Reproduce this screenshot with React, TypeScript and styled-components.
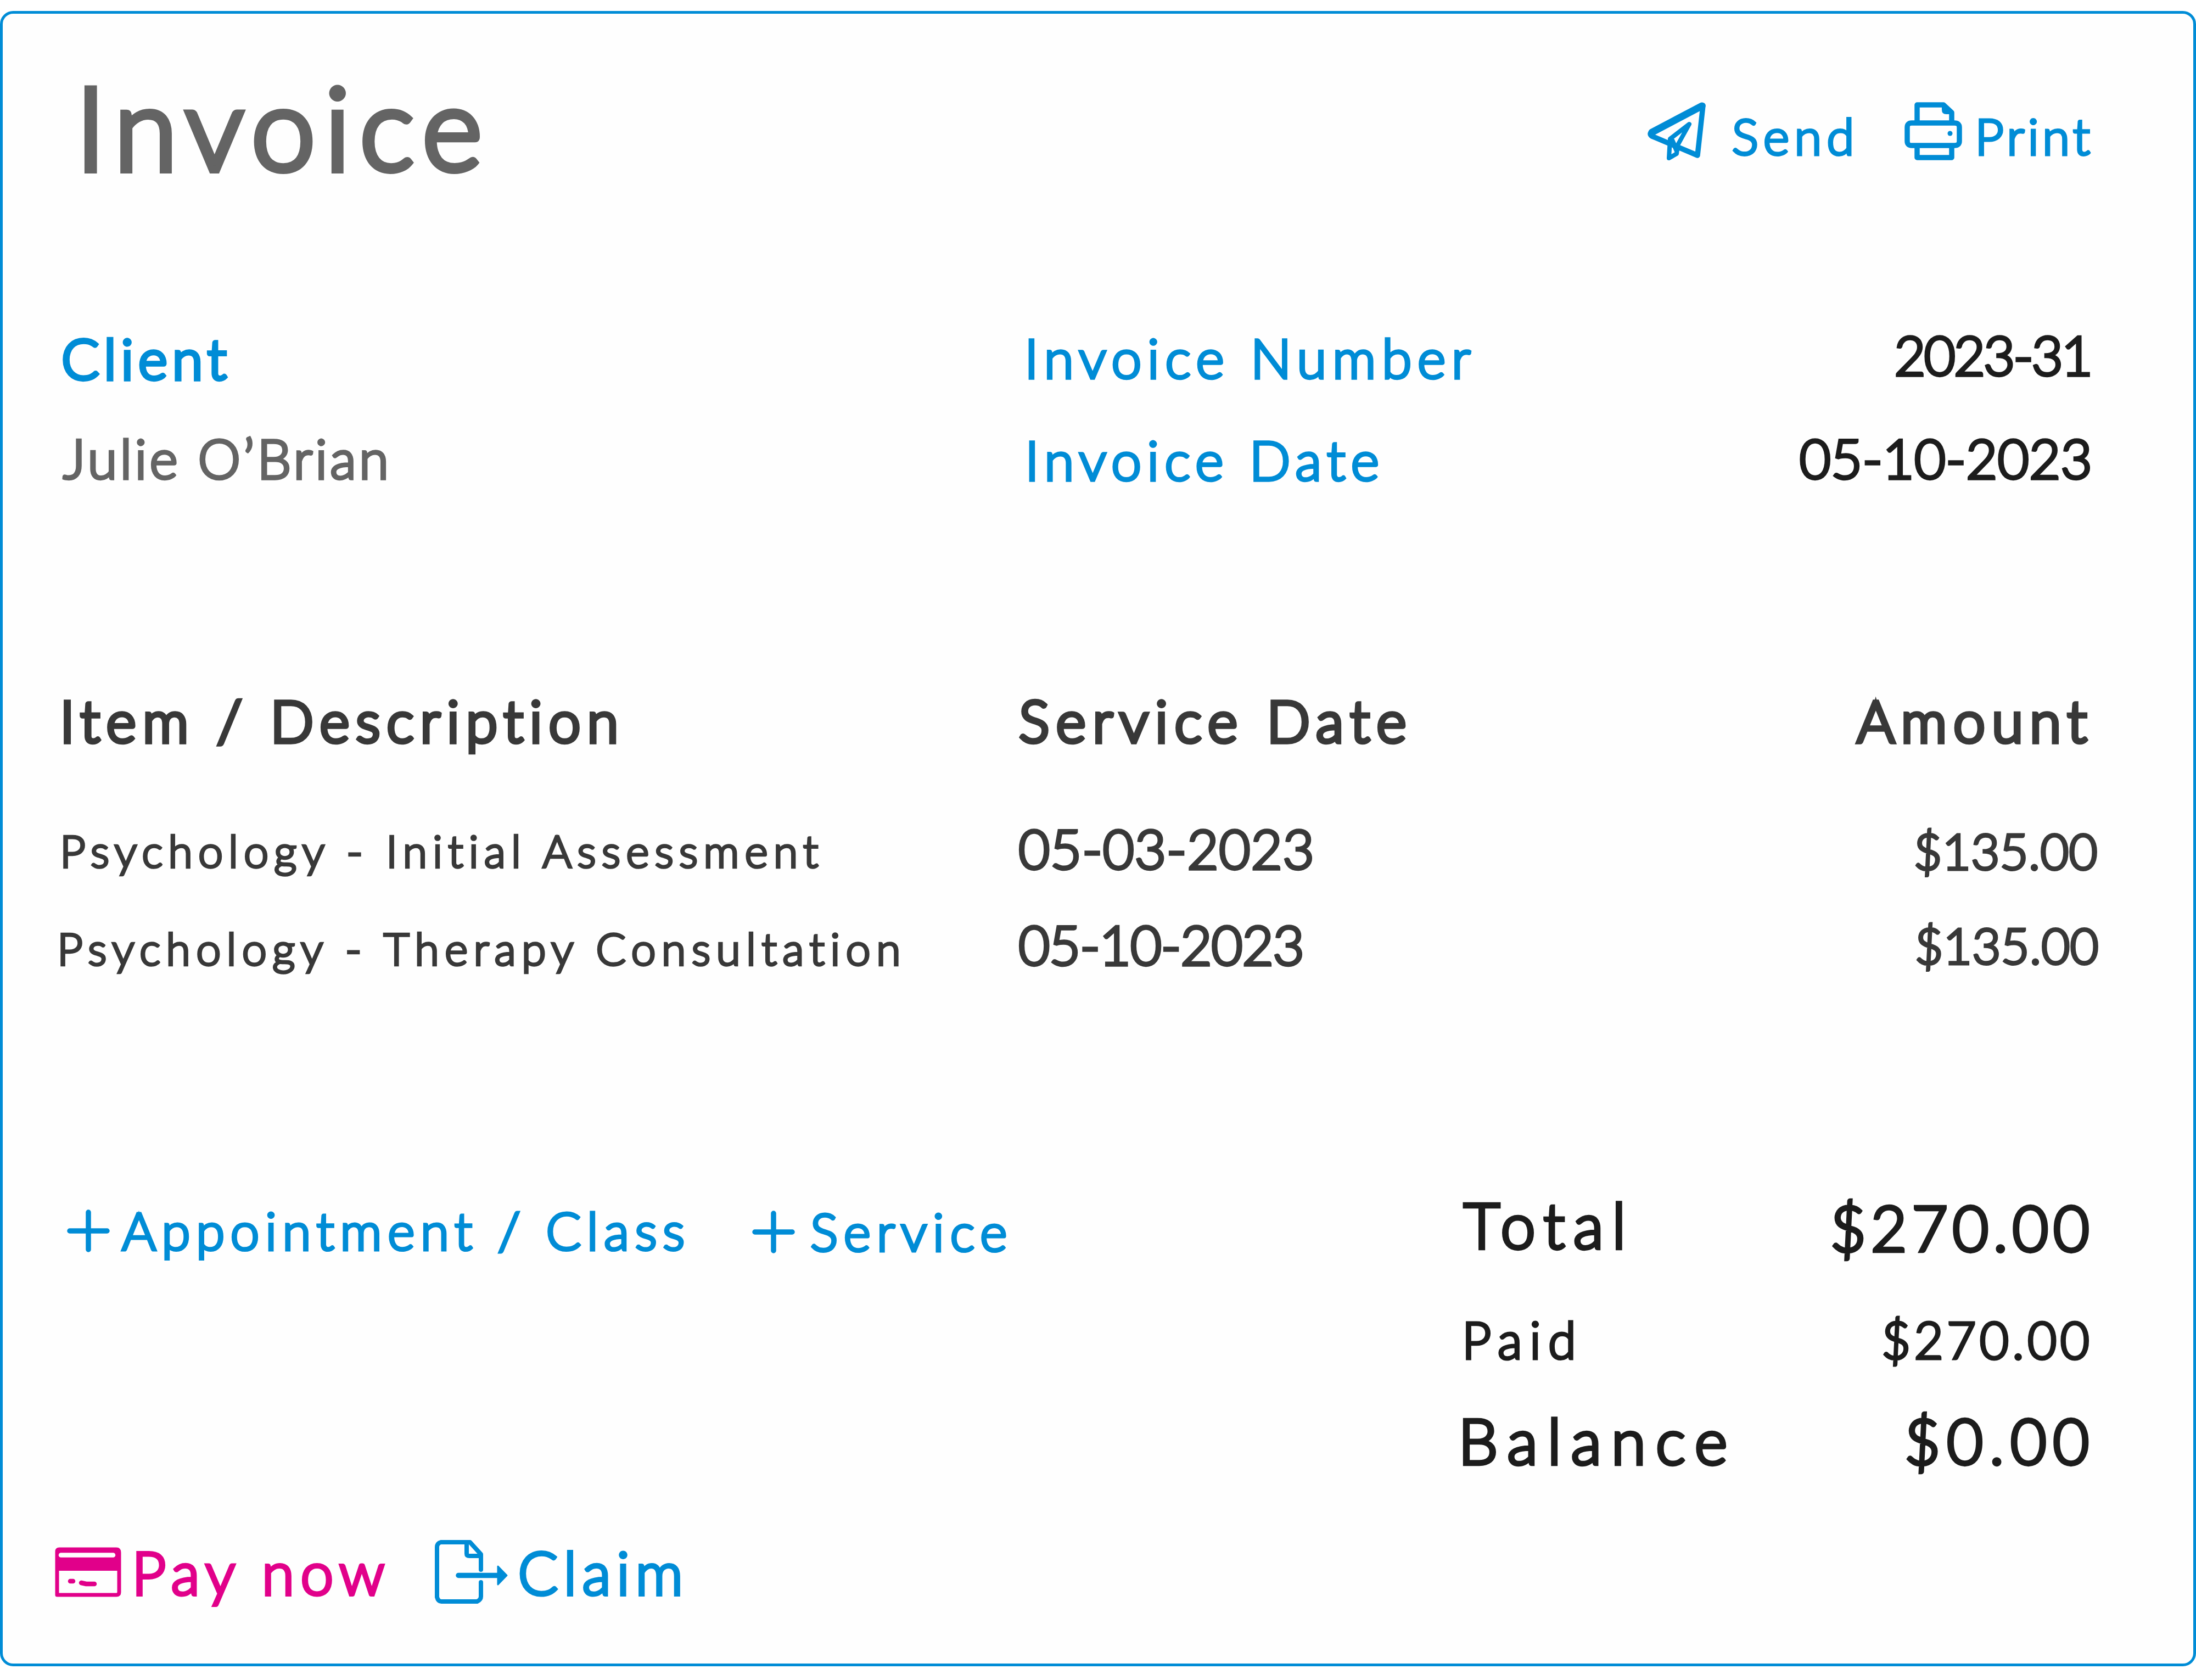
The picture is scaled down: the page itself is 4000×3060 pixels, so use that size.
import React from 'react';
import styled, { createGlobalStyle } from 'styled-components';

const colors = {
  blue: '#008cd6',
  magenta: '#e1008a',
  grey: '#646464',
  dark: '#383838',
  ink: '#1c1c1c',
};

const GlobalStyle = createGlobalStyle`
  body {
    margin: 0;
    background: #ffffff;
    font-family: Lato, 'Open Sans', sans-serif;
  }
`;

const Page = styled.div`
  padding: 20px 0 25px;
  width: 4000px;
  box-sizing: border-box;
`;

const Sheet = styled.main`
  box-sizing: border-box;
  height: 3015px;
  padding: 100px 170px 0 99px;
  border: 5px solid ${colors.blue};
  border-radius: 24px;
  background: #fefefe;
`;

const Header = styled.header`
  display: flex;
  justify-content: space-between;
  align-items: flex-start;
  height: 471px;
`;

const Row = styled.div<{ $height: number }>`
  display: grid;
  grid-template-columns: 1749px 1fr auto;
  align-items: start;
  height: ${props => props.$height}px;
`;

// Light weight with a round outline gives the soft, even strokes.
const Text = styled.span<{
  $size: number;
  $color?: string;
  $spacing?: number;
  $stroke?: number;
  $top?: number;
  $left?: number;
  $right?: number;
}>`
  display: block;
  font-size: ${props => props.$size}px;
  font-weight: 300;
  line-height: 1;
  white-space: nowrap;
  color: ${props => props.$color || colors.ink};
  letter-spacing: ${props => props.$spacing || 0}px;
  -webkit-text-stroke: ${props => props.$stroke || 0.055}em currentColor;
  stroke-linejoin: round;
  margin: ${props => props.$top || 0}px ${props => props.$right || 0}px 0 ${props => props.$left || 0}px;
`;

const Actions = styled.div<{ $left?: number; $right?: number }>`
  display: flex;
  align-items: flex-start;
  margin-left: ${props => props.$left || 0}px;
  margin-right: ${props => props.$right || 0}px;
`;

const Action = styled.a<{ $gap: number; $after?: number }>`
  display: flex;
  align-items: flex-start;
  gap: ${props => props.$gap}px;
  margin-right: ${props => props.$after || 0}px;
`;

const Icon = styled.svg<{ $top: number; $color?: string }>`
  display: block;
  flex: none;
  margin-top: ${props => props.$top}px;
  color: ${props => props.$color || colors.blue};
  fill: none;
  stroke: currentColor;
  stroke-linecap: round;
  stroke-linejoin: round;
`;

const Summary = styled.section`
  display: flex;
  justify-content: space-between;
  align-items: flex-start;
  height: 620px;
`;

const Totals = styled.div`
  width: 1170px;
`;

const TotalLine = styled.div<{ $height: number }>`
  display: flex;
  justify-content: space-between;
  align-items: flex-start;
  height: ${props => props.$height}px;
`;

const SendIcon = () => (
  <Icon $top={55} width="120" height="120" viewBox="3000 180 120 120" strokeWidth="9.5">
    <path d="M3105 192 L3012 240 Q3006 244 3012 248 L3095 283 Z" />
    <path d="M3103 193 L3012 241" strokeWidth="13" />
    <path d="M3080 226 L3045 253 L3043 288 L3057 280 L3059 264 Z" strokeWidth="8" />
    <path d="M3049 256 L3057 274" strokeWidth="9" />
  </Icon>
);

const PrintIcon = () => (
  <Icon $top={55} width="120" height="120" viewBox="3465 180 120 120" strokeWidth="9.5">
    <path d="M3493 222 V191 H3541 L3556 205 V222" />
    <path d="M3540 189 L3558 204 V206 H3546 Q3540 206 3540 200 Z" fill="currentColor" strokeWidth="4" />
    <path d="M3483 224 H3561 Q3570 224 3570 232 V257 Q3570 265 3561 265 H3483 Q3475 265 3475 257 V232 Q3475 224 3483 224 Z" />
    <path d="M3493 267 V287 H3556 V267" />
    <circle cx="3553" cy="243" r="4.5" fill="currentColor" stroke="none" />
  </Icon>
);

const PlusIcon: React.FC<{ top: number }> = ({ top }) => (
  <Icon $top={top} width="78" height="78" viewBox="0 0 78 78" strokeWidth="9.5">
    <path d="M39 5 V73 M5 39 H73" />
  </Icon>
);

const CardIcon = () => (
  <Icon $top={19} $color={colors.magenta} width="122" height="98" viewBox="100 2815 122 98" strokeWidth="7">
    <path d="M108 2822 H212 Q217 2822 217 2828 V2900 Q217 2905 212 2905 H104 V2826 Q104 2822 108 2822 Z" />
    <path d="M104 2824 H217 V2861 H104 Z" fill="currentColor" stroke="none" />
    <path d="M111 2832.5 H206" stroke="#fefefe" strokeWidth="8.5" />
    <path d="M128 2880 H133" strokeWidth="8.5" />
    <path d="M148 2883 L157 2885 H172" strokeWidth="8.5" />
  </Icon>
);

const ClaimIcon = () => (
  <Icon $top={4} width="136" height="126" viewBox="790 2800 136 126" strokeWidth="8">
    <path d="M876 2859 V2831 L856 2809 H803 Q796 2811 796 2818 V2909 Q798 2917 804 2917 H869 Q876 2914 876 2908 V2882" />
    <path d="M850 2810 V2830 Q850 2834 855 2834 H876" />
    <path d="M835 2869.5 H910" strokeWidth="9.5" />
    <path d="M907 2853 L923 2869.5 L907 2886 Z" fill="currentColor" strokeWidth="3" />
  </Icon>
);

interface Item {
  name: string;
  nameSpacing: number;
  nameLeft: number;
  nameTop: number;
  date: string;
  dateSpacing: number;
  amountTop: number;
  amountRight: number;
  height: number;
}

const items: Item[] = [
  {
    name: 'Psychology - Initial Assessment',
    nameSpacing: 10,
    nameLeft: 5,
    nameTop: 11,
    date: '05-03-2023',
    dateSpacing: 0.7,
    amountTop: 7,
    amountRight: 4,
    height: 175,
  },
  {
    name: 'Psychology - Therapy Consultation',
    nameSpacing: 10.25,
    nameLeft: 0,
    nameTop: 14,
    date: '05-10-2023',
    dateSpacing: -1.3,
    amountTop: 4,
    amountRight: 2,
    height: 504,
  },
];

const App: React.FC = () => {
  return (
    <Page>
      <GlobalStyle />
      <Sheet>
        <Header>
          <Text as="h1" $size={209} $color={colors.grey} $spacing={17.2} $stroke={0.057} $left={34} $top={0}>
            Invoice
          </Text>
          <Actions $right={12}>
            <Action $gap={37} $after={78}>
              <SendIcon />
              <Text $size={91} $color={colors.blue} $spacing={9} $top={76}>Send</Text>
            </Action>
            <Action $gap={13}>
              <PrintIcon />
              <Text $size={91} $color={colors.blue} $spacing={6.2} $top={76}>Print</Text>
            </Action>
          </Actions>
        </Header>

        <Row $height={188}>
          <Text $size={101} $color={colors.blue} $spacing={9} $stroke={0.072} $left={8} $top={6}>Client</Text>
          <Text $size={99} $color={colors.blue} $spacing={10.4} $left={13} $top={5}>Invoice Number</Text>
          <Text $size={99} $spacing={-3.2} $right={16}>2023-31</Text>
        </Row>
        <Row $height={478}>
          <Text $size={98} $color={colors.grey} $spacing={5.2} $left={11} $top={1}>Julie O’Brian</Text>
          <Text $size={99} $color={colors.blue} $spacing={10} $left={14} $top={3}>Invoice Date</Text>
          <Text $size={99} $spacing={0.1} $right={14}>05-10-2023</Text>
        </Row>

        <Row $height={235}>
          <Text $size={104} $color={colors.dark} $spacing={11.8} $stroke={0.073} $left={5} $top={-2}>Item / Description</Text>
          <Text $size={104} $color={colors.dark} $spacing={12.4} $stroke={0.073} $left={3} $top={-2}>Service Date</Text>
          <Text $size={104} $color={colors.dark} $spacing={11.9} $stroke={0.073} $right={12} $top={-2}>Amount</Text>
        </Row>
        {items.map(item => (
          <Row key={item.name} $height={item.height}>
            <Text $size={81} $color={colors.dark} $spacing={item.nameSpacing} $left={item.nameLeft} $top={item.nameTop}>
              {item.name}
            </Text>
            <Text $size={99} $color={colors.dark} $spacing={item.dateSpacing} $left={2} $top={-2}>{item.date}</Text>
            <Text $size={90} $color={colors.dark} $spacing={0.2} $top={item.amountTop} $right={item.amountRight}>
              $135.00
            </Text>
          </Row>
        ))}

        <Summary>
          <Actions $left={18}>
            <Action $gap={22} $after={112}>
              <PlusIcon top={27} />
              <Text $size={95} $color={colors.blue} $spacing={10.3} $top={17}>Appointment / Class</Text>
            </Action>
            <Action $gap={28}>
              <PlusIcon top={29} />
              <Text $size={95} $color={colors.blue} $spacing={10.5} $top={19}>Service</Text>
            </Action>
          </Actions>
          <Totals>
            <TotalLine $height={218}>
              <Text $size={114} $spacing={15.4} $left={11} $top={-3}>Total</Text>
              <Text $size={114} $spacing={8.2} $top={2} $right={11}>$270.00</Text>
            </TotalLine>
            <TotalLine $height={174}>
              <Text $size={92} $spacing={13.5} $left={8}>Paid</Text>
              <Text $size={92} $spacing={6.2} $right={13}>$270.00</Text>
            </TotalLine>
            <TotalLine $height={120}>
              <Text $size={115} $spacing={17.6} $left={1} $top={-3}>Balance</Text>
              <Text $size={114} $spacing={11.5} $top={-2} $right={8}>$0.00</Text>
            </TotalLine>
          </Totals>
        </Summary>

        <Actions $left={-4}>
          <Action $gap={18} $after={79}>
            <CardIcon />
            <Text $size={108} $color={colors.magenta} $spacing={11} $top={13}>Pay now</Text>
          </Action>
          <Action $gap={17}>
            <ClaimIcon />
            <Text $size={108} $color={colors.blue} $spacing={10.2} $top={13}>Claim</Text>
          </Action>
        </Actions>
      </Sheet>
    </Page>
  );
};

export default App;
